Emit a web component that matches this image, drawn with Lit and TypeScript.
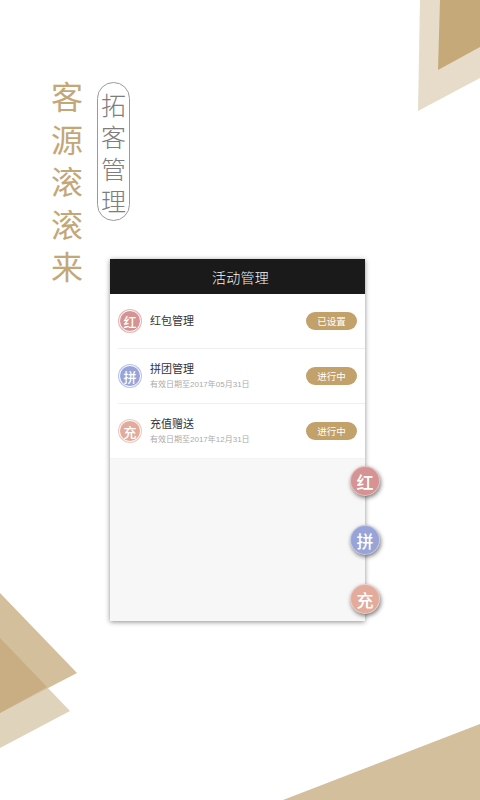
import { LitElement, html, css, svg } from "lit";
import { customElement } from "lit/decorators.js";

const rows = [
  { ch: "红", tone: "red", title: "红包管理", sub: "", status: "已设置" },
  { ch: "拼", tone: "blue", title: "拼团管理", sub: "有效日期至2017年05月31日", status: "进行中" },
  { ch: "充", tone: "peach", title: "充值赠送", sub: "有效日期至2017年12月31日", status: "进行中" },
];

@customElement("app-root")
export class AppRoot extends LitElement {
  static styles = css`
    :host {
      display: block;
      width: 480px;
      height: 800px;
      background: #fff;
      font-family: "Liberation Sans", "Noto Sans CJK SC", sans-serif;
    }
    .page {
      position: relative;
      box-sizing: border-box;
      width: 480px;
      height: 800px;
      overflow: hidden;
      display: flex;
      align-items: flex-start;
      padding: 74px 0 0 51px;
    }
    .deco {
      position: absolute;
      inset: 0;
      width: 480px;
      height: 800px;
    }
    .slogan {
      position: relative;
      display: flex;
      flex-direction: column;
      width: 32px;
      font-family: "Noto Sans CJK SC", sans-serif;
      font-weight: 400;
      font-size: 32px;
      line-height: 42.5px;
      text-align: center;
      color: #c4a779;
    }
    .side {
      position: relative;
      margin-left: 14px;
      display: flex;
      flex-direction: column;
      align-items: flex-start;
      padding-top: 8px;
    }
    .pill {
      box-sizing: border-box;
      width: 33px;
      height: 139px;
      border: 1px solid #9a9a9a;
      border-radius: 17px;
      display: flex;
      flex-direction: column;
      align-items: center;
      justify-content: center;
      font-family: "Noto Sans CJK SC", sans-serif;
      font-weight: 300;
      font-size: 25px;
      line-height: 32px;
      color: #7d7d7d;
    }
    .card {
      position: relative;
      margin: 38px 0 0 13px;
      width: 255px;
      height: 362px;
      background: #f7f7f7;
      box-shadow: 0 1px 5px rgba(0, 0, 0, 0.45);
    }
    .head {
      box-sizing: border-box;
      height: 35px;
      padding-left: 6px;
      background: #1a1a1a;
      color: #f4f4f4;
      font-size: 14px;
      font-weight: 300;
      display: flex;
      align-items: center;
      justify-content: center;
      letter-spacing: 0.2px;
    }
    .list {
      background: #fff;
    }
    .row {
      box-sizing: border-box;
      height: 55px;
      margin-left: 8px;
      padding: 0 8px 0 1px;
      border-bottom: 1px solid #eeeeee;
      display: flex;
      align-items: center;
    }
    .row:last-child {
      margin-left: 0;
      padding-left: 9px;
      border-bottom-color: #f3f3f3;
    }
    .dot {
      box-sizing: border-box;
      flex: none;
      border-radius: 50%;
      display: flex;
      align-items: center;
      justify-content: center;
      color: #fff;
      font-weight: 500;
    }
    .row .dot {
      width: 22px;
      height: 22px;
      font-size: 13px;
      border: 1px solid #fff;
    }
    .red { background: #d69393; box-shadow: 0 0 0 1px #e6b6b6; }
    .blue { background: #98a4d8; box-shadow: 0 0 0 1px #bcc5e8; }
    .peach { background: #e3ab9b; box-shadow: 0 0 0 1px #eccbc1; }
    .text {
      flex: 1;
      margin-left: 9px;
      min-width: 0;
    }
    .title {
      font-size: 11px;
      line-height: 15px;
      color: #333;
    }
    .sub {
      font-size: 8px;
      line-height: 11px;
      margin-top: 2px;
      color: #aaa;
    }
    .badge {
      flex: none;
      width: 51px;
      height: 18px;
      border-radius: 9px;
      background: #c2a16b;
      color: #fff;
      font-size: 9.5px;
      display: flex;
      align-items: center;
      justify-content: center;
    }
    .float {
      position: absolute;
      right: -15px;
      width: 30px;
      height: 30px;
      font-size: 17px;
      border: 1px solid rgba(255, 255, 255, 0.45);
    }
    .float.red, .float.blue, .float.peach {
      box-shadow: 1px 2px 4px rgba(0, 0, 0, 0.5);
    }
  `;

  render() {
    return html`
      <div class="page">
        <svg class="deco" viewBox="0 0 480 800">
          ${svg`
            <polygon points="420,0 480,0 480,78 418,111" fill="#e6dcc9" />
            <polygon points="440,0 480,0 480,47 438,70" fill="#c6a978" />
            <polygon points="0,638 70,711 0,748" fill="#e0d3bb" />
            <polygon points="0,593 77,673 0,713" fill="#d3bf9b" />
            <polygon points="0,638 47,687 0,713" fill="#c8ae82" />
            <polygon points="283,800 480,724 480,800" fill="#d3bf9b" />
          `}
        </svg>
        <div class="slogan">
          ${[..."客源滚滚来"].map((c) => html`<span>${c}</span>`)}
        </div>
        <div class="side">
          <div class="pill">
            ${[..."拓客管理"].map((c) => html`<span>${c}</span>`)}
          </div>
          <div class="card">
            <div class="head">活动管理</div>
            <div class="list">
              ${rows.map(
                (r) => html`
                  <div class="row">
                    <div class="dot ${r.tone}">${r.ch}</div>
                    <div class="text">
                      <div class="title">${r.title}</div>
                      ${r.sub ? html`<div class="sub">${r.sub}</div>` : ""}
                    </div>
                    <div class="badge">${r.status}</div>
                  </div>
                `
              )}
            </div>
            ${rows.map(
              (r, i) => html`
                <div class="dot float ${r.tone}" style="top: ${207 + i * 59}px">${r.ch}</div>
              `
            )}
          </div>
        </div>
      </div>
    `;
  }
}
